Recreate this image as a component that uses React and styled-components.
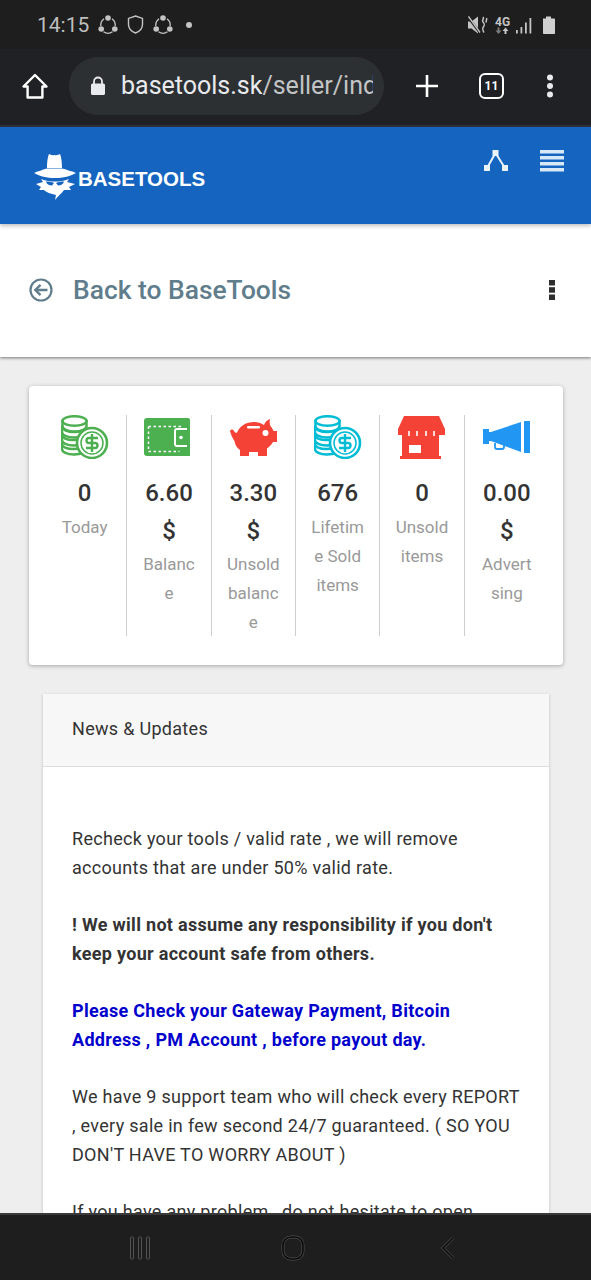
import React from 'react';
import styled, { createGlobalStyle } from 'styled-components';

const GlobalStyle = createGlobalStyle`
    html, body {
        margin: 0;
        padding: 0;
        background: #1e1e1e;
    }
    * {
        box-sizing: border-box;
    }
`

// Icons
function ShareCircle() {
    return (
        <svg width="20" height="19" viewBox="0 0 20 19" fill="none" stroke="#c4c4c4" strokeWidth="1.3">
            <path d="M6 3.800A8 8 0 0 0 2.800 11M14 3.800A8 8 0 0 1 17.200 11M5.500 16.800a8 8 0 0 0 9 0" />
            <circle cx="10" cy="3" r="2.800" fill="#c4c4c4" stroke="none" />
            <circle cx="3.200" cy="14" r="2.800" fill="#c4c4c4" stroke="none" />
            <circle cx="16.800" cy="14" r="2.800" fill="#c4c4c4" stroke="none" />
        </svg>
    )
}

function Shield() {
    return (
        <svg width="17" height="19" viewBox="0 0 17 19" fill="none" stroke="#c4c4c4" strokeWidth="1.4">
            <path d="M8.500 1l7 2.400v6c0 4-3 7-7 8.600-4-1.600-7-4.600-7-8.600v-6z" />
        </svg>
    )
}

function StatusRight() {
    return (
        <svg width="88" height="18" viewBox="0 0 88 18" fill="#c4c4c4">
            <path d="M0 5.500h3.500L10 0.500v17L3.500 12.500H0z" />
            <path d="M0 1l12 16" stroke="#1e1e1e" strokeWidth="2.400" />
            <path d="M0.500 0.500l11.500 16" stroke="#c4c4c4" strokeWidth="1.300" />
            <path d="M15 1c2 2-2 3 0 5s2 3 0 5.500c-1 2 0 3 1 5M18.500 2c1 2-1.500 3 0 4.500" fill="none" stroke="#c4c4c4" strokeWidth="1.500" />
            <path d="M29.500 11.500h2v3h2l-3 3.500-3-3.500h2z" fill="#7c7c7c" />
            <path d="M36.500 18v-3h-2l3-3.500 3 3.500h-2v3z" />
            <path d="M48 14h1.800v3.500H48zM52.500 11h1.800v6.500h-1.800zM57 6.500h1.800v11H57zM61.500 2h1.800v15.500h-1.800z" />
            <path d="M75 2.500h3V0.500h5v2h3c.6 0 1 .4 1 1V17c0 .6-.4 1-1 1H76c-.6 0-1-.4-1-1z" fill="#d0d0d0" />
        </svg>
    )
}

function HomeIcon() {
    return (
        <svg width="28" height="28" viewBox="0 0 28 28" fill="none" stroke="#fff" strokeWidth="2.400" strokeLinejoin="round">
            <path d="M14 3L2.500 14.500H6.600V25.500H21.400V14.500H25.500z" />
        </svg>
    )
}

function LockIcon() {
    return (
        <LockSvg width="16" height="20" viewBox="0 0 16 20">
            <path d="M4 9V5.500a4 4 0 0 1 8 0V9" fill="none" stroke="#e8eaed" strokeWidth="1.800" />
            <rect x="1" y="7.500" width="14" height="11.500" rx="1.600" fill="#e8eaed" />
        </LockSvg>
    )
}

function PlusIcon() {
    return (
        <svg width="24" height="24" viewBox="0 0 24 24" stroke="#fff" strokeWidth="2.600">
            <path d="M12 1v22M1 12h22" />
        </svg>
    )
}

function Dots() {
    return (
        <svg width="8" height="24" viewBox="0 0 8 24" fill="#e8eaed">
            <circle cx="4" cy="3.500" r="3" />
            <circle cx="4" cy="12" r="3" />
            <circle cx="4" cy="20.500" r="3" />
        </svg>
    )
}

function SpyLogo() {
    return (
        <svg width="44" height="47" viewBox="0 0 44 47" fill="#fff">
            <path d="M14 15C14 8 15 3 16 1C18 2 19 2.500 21.500 2C24 2.500 25 2 27 1C28 3 29 8 29 15Z" />
            <path d="M1 20C6 18 10 16.500 14 15.500H29C33 16.500 38 18 43 20C38 23 30 25 22 25C14 25 6 23 1 20Z" />
            <path d="M3 31L10 29L8 26C13 28 17 28.500 22 28.500C27 28.500 31 28 36 26L34 29L42 31L36 34L38 37L31 37C29 40 26 42 22 47L23 42C18 41 13 39 11 37L6 37L8 34Z" />
            <path d="M13 28.500c3 0 6 .5 8 1.500l-2 2.500c-3 0-5.500-1.500-6-4zM31 28.500c-3 0-6 .5-8 1.500l2 2.500c3 0 5.500-1.500 6-4z" fill="#1565c0" />
        </svg>
    )
}

function NetworkIcon() {
    return (
        <svg width="24" height="22" viewBox="0 0 24 22" fill="#e8f2fb">
            <rect x="8.500" y="0" width="6" height="6" />
            <rect x="0" y="15" width="6" height="6" />
            <rect x="18" y="15" width="6" height="6" />
            <path d="M11.500 3L3 18M11.500 3L21 18" stroke="#e8f2fb" strokeWidth="2" fill="none" />
        </svg>
    )
}

function MenuIcon() {
    return (
        <svg width="24" height="22" viewBox="0 0 24 22" fill="#d7e8f7">
            <rect y="0" width="24" height="3.500" />
            <rect y="6" width="24" height="3.500" />
            <rect y="12" width="24" height="3.500" />
            <rect y="18" width="24" height="3.500" />
        </svg>
    )
}

function BackIcon() {
    return (
        <svg width="24" height="24" viewBox="0 0 24 24" fill="none" stroke="#607d8b" strokeWidth="2.200">
            <circle cx="12" cy="12" r="10.500" />
            <path d="M18.500 12H6.500M11.500 6.800L6.300 12l5.200 5.200" strokeWidth="2.400" />
        </svg>
    )
}

function KebabIcon() {
    return (
        <svg width="6" height="20" viewBox="0 0 6 20" fill="#2d2d2d">
            <rect width="6" height="5.500" />
            <rect y="7.200" width="6" height="5.500" />
            <rect y="14.500" width="6" height="5.500" />
        </svg>
    )
}

function CoinsIcon({ color }) {
    return (
        <svg width="48" height="44" viewBox="1 0 48 44" fill="none">
            <g fill="#fff" stroke={color} strokeWidth="2.500">
                <path d="M2 29v5c0 3 5 5.500 12 5.500 4 0 7-.8 9.500-2V29z" />
                <ellipse cx="13" cy="29" rx="11" ry="5" />
                <path d="M2 20v5c0 3 5 5.500 12 5.500 4 0 7-.8 9.500-2V20z" />
                <ellipse cx="13" cy="20" rx="11" ry="5" />
                <path d="M2 12v5c0 3 5 5.500 12 5.500s12-2.500 12-5.500v-5z" />
                <ellipse cx="14" cy="12" rx="11.500" ry="5" />
                <path d="M2.500 6v5c0 3 5 5.500 12 5.500s12-2.500 12-5.500V6z" />
                <ellipse cx="14.500" cy="6" rx="12" ry="4.800" />
            </g>
            <circle cx="32" cy="28" r="15" fill="#fff" stroke={color} strokeWidth="2.600" />
            <circle cx="32" cy="28" r="11" fill="#fff" stroke={color} strokeWidth="1.500" />
            <path d="M38 23h-9a2.500 2.500 0 0 0 0 5h6a2.500 2.500 0 0 1 0 5H26M32 19v18" stroke={color} strokeWidth="2.400" fill="none" />
        </svg>
    )
}

function WalletIcon() {
    return (
        <svg width="50" height="38" viewBox="0 0 50 38">
            <path d="M3 0h41a2 2 0 0 1 2 2v36H3a3 3 0 0 1-3-3V3a3 3 0 0 1 3-3z" fill="#4caf50" />
            <path d="M4.500 8.500h35M4.500 8.500v25h31" stroke="#fff" strokeWidth="1.500" strokeDasharray="2.500 2.500" fill="none" />
            <path d="M43 11H33a2 2 0 0 0-2 2v13a2 2 0 0 0 2 2h10" fill="none" stroke="#fff" strokeWidth="2" />
            <circle cx="37" cy="19.500" r="1.800" fill="#fff" />
        </svg>
    )
}

function PigIcon() {
    return (
        <svg width="47" height="38" viewBox="0 0 47 38" fill="#f44336">
            <path d="M0 13c1-2 3-2 4 0 .5 1.500 1.500 2 3 1.500C10 8 16 4 24 4c4 0 7 1 10 3 1-3 3-5 6-6-.5 3-.5 5 .5 7 1.500 1.500 2 3 3 5H47v11h-4c-1.500 3-4 5-6 6.500V38h-9v-4h-9v4h-9v-6c-3-2-5-5-5.500-9C3 21 1 17 0 13z" />
            <rect x="17" y="8" width="13" height="2.600" rx="1.300" fill="#fff" />
            <circle cx="35.500" cy="15" r="3" fill="#fff" />
        </svg>
    )
}

function ShopIcon() {
    return (
        <svg width="47" height="43" viewBox="0 0 47 43" fill="#f44336">
            <path d="M6 0H41L47 13V19H0V13Z" />
            <path d="M4 19H41V40H4Z" />
            <rect x="2" y="40" width="41" height="3" />
            <path d="M10.200 15h1.600v5h-1.600zM18.200 15h1.600v5h-1.600zM27.200 15h1.600v5h-1.600zM35.200 15h1.600v5h-1.600z" fill="#fff" />
            <rect x="11" y="29" width="12" height="8" fill="#fff" />
        </svg>
    )
}

function MegaphoneIcon() {
    return (
        <svg width="47" height="32" viewBox="0 0 47 32" fill="#2196f3">
            <rect x="0" y="8" width="6" height="15" />
            <rect x="6" y="11" width="3" height="9" />
            <path d="M8 11L38 1v30L8 20z" />
            <rect x="41" y="0" width="6" height="32" />
            <path d="M12 22v4c0 1.500 1 2 2 2h5c1 0 2-.5 2-2v-2" fill="none" stroke="#2196f3" strokeWidth="1.800" />
        </svg>
    )
}

const stats = [
    { icon: <CoinsIcon color="#4caf50" />, value: '0', label: 'Today' },
    { icon: <WalletIcon />, value: '6.60 $', label: 'Balance' },
    { icon: <PigIcon />, value: '3.30 $', label: 'Unsold balance' },
    { icon: <CoinsIcon color="#00bcd4" />, value: '676', label: 'Lifetime Sold items' },
    { icon: <ShopIcon />, value: '0', label: 'Unsold items' },
    { icon: <MegaphoneIcon />, value: '0.00 $', label: 'Advertsing' },
]

export default function App() {
    return (
        <Phone>
            <GlobalStyle />
            <StatusBar>
                <StatusLeft>
                    <Clock>14:15</Clock>
                    <ShareCircle />
                    <Shield />
                    <ShareCircle />
                    <StatusDot />
                </StatusLeft>
                <StatusRightWrap>
                    <FourG>4G</FourG>
                    <StatusRight />
                </StatusRightWrap>
            </StatusBar>
            <Toolbar>
                <HomeIcon />
                <UrlPill>
                    <LockIcon />
                    <UrlText><strong>basetools.sk</strong>/seller/index.html</UrlText>
                </UrlPill>
                <PlusIcon />
                <TabCount>11</TabCount>
                <Dots />
            </Toolbar>
            <Viewport>
                <Header>
                    <Logo>
                        <SpyLogo />
                        <LogoText>BASETOOLS</LogoText>
                    </Logo>
                    <HeaderIcons>
                        <NetworkIcon />
                        <MenuIcon />
                    </HeaderIcons>
                </Header>
                <TitleBar>
                    <BackLink>
                        <BackIcon />
                        <BackText>Back to BaseTools</BackText>
                    </BackLink>
                    <KebabIcon />
                </TitleBar>
                <Content>
                    <StatsCard>
                        {stats.map((s, i) => (
                            <StatColumn key={i} $last={i === stats.length - 1}>
                                <StatIcon>{s.icon}</StatIcon>
                                <StatValue>{s.value}</StatValue>
                                <StatLabel>{s.label}</StatLabel>
                            </StatColumn>
                        ))}
                    </StatsCard>
                    <NewsCard>
                        <NewsHeader>News &amp; Updates</NewsHeader>
                        <NewsBody>
                            <p>Recheck your tools / valid rate , we will remove accounts that are under 50% valid rate.</p>
                            <p><b>! We will not assume any responsibility if you don't keep your account safe from others.</b></p>
                            <BlueNote>Please Check your Gateway Payment, Bitcoin Address , PM Account , before payout day.</BlueNote>
                            <p>We have 9 support team who will check every REPORT , every sale in few second 24/7 guaranteed. ( SO YOU DON'T HAVE TO WORRY ABOUT )</p>
                            <p>If you have any problem , do not hesitate to open</p>
                        </NewsBody>
                    </NewsCard>
                </Content>
            </Viewport>
            <NavBar>
                <svg width="22" height="24" viewBox="0 0 22 24" fill="none" stroke="#525252" strokeWidth="1">
                    <rect x="1.500" y="1" width="3" height="22" rx="1" />
                    <rect x="9.500" y="1" width="3" height="22" rx="1" />
                    <rect x="17.500" y="1" width="3" height="22" rx="1" />
                </svg>
                <svg width="24" height="26" viewBox="0 0 24 26" fill="none">
                    <rect x="2" y="2" width="20" height="22" rx="8" stroke="#4c4c4c" strokeWidth="3" />
                    <rect x="2" y="2" width="20" height="22" rx="8" stroke="#0a0a0a" strokeWidth="1.600" />
                </svg>
                <BackChevron width="16" height="24" viewBox="0 0 16 24" fill="none">
                    <path d="M13 2L3 12l10 10" stroke="#4c4c4c" strokeWidth="3" />
                    <path d="M13 2L3 12l10 10" stroke="#0a0a0a" strokeWidth="1.600" />
                </BackChevron>
            </NavBar>
        </Phone>
    )
}

const Phone = styled.div`
    width: 591px;
    height: 1280px;
    display: flex;
    flex-direction: column;
    overflow: hidden;
    font-family: Roboto, "Liberation Sans", sans-serif;
    background: #1e1e1e;
`

const StatusBar = styled.div`
    height: 49px;
    flex: none;
    padding: 0 35px 0 37px;
    display: flex;
    align-items: center;
    justify-content: space-between;
    background: #1e1e1e;
`

const StatusLeft = styled.div`
    display: flex;
    align-items: center;
    gap: 9px;
`

const Clock = styled.span`
    font-size: 21px;
    color: #bdbdbd;
`

const StatusDot = styled.span`
    width: 6px;
    height: 6px;
    margin-left: 4px;
    border-radius: 50%;
    background: #c4c4c4;
`

const StatusRightWrap = styled.div`
    position: relative;
    display: flex;
`

const FourG = styled.span`
    position: absolute;
    left: 27px;
    top: -1px;
    font-size: 12px;
    font-weight: 700;
    color: #c4c4c4;
`

const Toolbar = styled.div`
    height: 78px;
    flex: none;
    padding: 0 37px 3px 21px;
    display: flex;
    align-items: center;
    background: #202124;
    border-bottom: 2px solid #2c2f33;

    & > svg:nth-of-type(2) {
        margin-left: 31px;
    }
    & > svg:nth-of-type(3) {
        margin-left: auto;
    }
`

const UrlPill = styled.div`
    width: 315px;
    height: 58px;
    margin-left: 20px;
    padding: 0 11px 0 21px;
    display: flex;
    align-items: center;
    gap: 15px;
    flex: none;
    border-radius: 29px;
    background: #2d3033;
`

const LockSvg = styled.svg`
    flex: none;
`

const UrlText = styled.div`
    font-size: 25px;
    color: #c2c4c6;
    white-space: nowrap;
    overflow: hidden;

    strong {
        font-weight: 400;
        color: #e8eaed;
    }
`

const TabCount = styled.div`
    width: 25px;
    height: 26px;
    margin-left: 40px;
    display: flex;
    align-items: center;
    justify-content: center;
    border: 2.5px solid #fff;
    border-radius: 6px;
    font-size: 12px;
    font-weight: 700;
    color: #fff;
`

const Viewport = styled.div`
    flex: 1;
    min-height: 0;
    overflow: hidden;
    background: #eeeeee;
`

const Header = styled.div`
    height: 97px;
    padding: 23px 27px 0 33px;
    display: flex;
    justify-content: space-between;
    align-items: flex-start;
    background: #1565c0;
    box-shadow: 0 2px 4px rgba(0, 0, 0, 0.25);
    position: relative;
`

const Logo = styled.div`
    display: flex;
    align-items: center;
    gap: 1px;
    margin-top: 3px;
`

const LogoText = styled.span`
    padding-top: 4px;
    font-family: "Liberation Sans", Arial, sans-serif;
    font-size: 20.5px;
    font-weight: 700;
    color: #fff;
`

const HeaderIcons = styled.div`
    display: flex;
    gap: 32px;
`

const TitleBar = styled.div`
    height: 133px;
    padding: 0 36px 2px 29px;
    display: flex;
    align-items: center;
    justify-content: space-between;
    background: #fff;
    box-shadow: 0 1px 3px rgba(0, 0, 0, 0.5);
`

const BackLink = styled.div`
    display: flex;
    align-items: center;
    gap: 20px;
`

const BackText = styled.span`
    font-size: 26.4px;
    font-weight: 500;
    color: #607d8b;
`

const Content = styled.div`
    padding: 29px 28px 0 29px;
`

const StatsCard = styled.div`
    padding: 29px 14px;
    display: grid;
    grid-template-columns: repeat(6, 84.33px);
    border-radius: 4px;
    background: #fff;
    box-shadow: 0 1px 4px rgba(0, 0, 0, 0.3);
`

const StatColumn = styled.div`
    height: 221px;
    padding: 0 15px;
    text-align: center;
    border-right: ${props => props.$last ? 'none' : '1px solid #cfcfcf'};
`

const StatIcon = styled.div`
    height: 44px;
    margin: 0 -15px 16px;
    display: flex;
    justify-content: center;
    align-items: center;
`

const StatValue = styled.div`
    font-size: 24px;
    font-weight: 500;
    line-height: 37.5px;
    color: #333;
`

const StatLabel = styled.div`
    font-size: 17px;
    line-height: 29px;
    color: #999;
    overflow-wrap: anywhere;
`

const NewsCard = styled.div`
    margin: 29px 14px 0;
    background: #fff;
    box-shadow: 0 1px 3px rgba(0, 0, 0, 0.2);
`

const NewsHeader = styled.div`
    height: 73px;
    padding: 0 29px 3px;
    display: flex;
    align-items: center;
    font-size: 18px;
    letter-spacing: 0.3px;
    color: #333;
    background: #f7f7f7;
    border-bottom: 1px solid #ddd;
`

const NewsBody = styled.div`
    padding: 57px 28px 0 29px;
    font-size: 18px;
    line-height: 29px;
    letter-spacing: 0.3px;
    color: #333;

    p {
        margin: 0 0 28px;
    }
    b {
        font-weight: 700;
    }
`

const BlueNote = styled.p`
    font-weight: 700;
    color: #0000cd;
`

const NavBar = styled.div`
    height: 67px;
    flex: none;
    padding: 0 0 0 129px;
    display: flex;
    align-items: center;
    gap: 130px;
    background: #1e1e1e;
    border-top: 2px solid #3a3a3a;
`

const BackChevron = styled.svg`
    margin-left: 5px;
`
